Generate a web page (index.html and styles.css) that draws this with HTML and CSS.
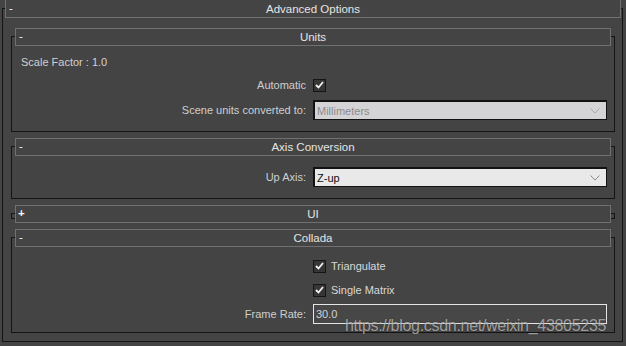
FILE: index.html
```html
<!DOCTYPE html>
<html>
<head>
    <meta name="viewport" content="width=device-width, initial-scale=1">
    <link rel="stylesheet" href="styles.css">
</head>
<body>
    <!-- Advanced Options rollout -->
    <div class="rollout">
        <div class="roll-head">
            <span class="sign">-</span>
            <span class="title">Advanced Options</span>
        </div>
        <div class="roll-body">

            <div class="group">
                <div class="roll-head sub">
                    <span class="sign">-</span>
                    <span class="title">Units</span>
                </div>
                <div class="group-body units">
                    <div class="full">Scale Factor : 1.0</div>
                    <div class="label">Automatic</div>
                    <div class="ctrl"><span class="check"><svg width="9" height="8" viewBox="0 0 9 8"><polyline points="1,4 3.5,6.5 8,1" fill="none" stroke="#f2f2f2" stroke-width="1.8"/></svg></span></div>
                    <div class="label">Scene units converted to:</div>
                    <div class="ctrl">
                        <div class="select disabled">
                            <span>Millimeters</span>
                            <svg width="10" height="6" viewBox="0 0 10 6"><polyline points="0.5,0.5 5,5 9.5,0.5" fill="none" stroke="#a9a9a9" stroke-width="1"/></svg>
                        </div>
                    </div>
                </div>
            </div>

            <div class="group">
                <div class="roll-head sub">
                    <span class="sign">-</span>
                    <span class="title">Axis Conversion</span>
                </div>
                <div class="group-body axis">
                    <div class="label">Up Axis:</div>
                    <div class="ctrl">
                        <div class="select">
                            <span>Z-up</span>
                            <svg width="10" height="6" viewBox="0 0 10 6"><polyline points="0.5,0.5 5,5 9.5,0.5" fill="none" stroke="#8a8a8a" stroke-width="1"/></svg>
                        </div>
                    </div>
                </div>
            </div>

            <div class="group collapsed">
                <div class="roll-head sub">
                    <span class="sign plus">+</span>
                    <span class="title">UI</span>
                </div>
            </div>

            <div class="group after-collapsed">
                <div class="roll-head sub">
                    <span class="sign">-</span>
                    <span class="title">Collada</span>
                </div>
                <div class="group-body collada">
                    <div class="label"></div>
                    <div class="ctrl"><span class="check"><svg width="9" height="8" viewBox="0 0 9 8"><polyline points="1,4 3.5,6.5 8,1" fill="none" stroke="#f2f2f2" stroke-width="1.8"/></svg></span><span class="check-text">Triangulate</span></div>
                    <div class="label"></div>
                    <div class="ctrl"><span class="check"><svg width="9" height="8" viewBox="0 0 9 8"><polyline points="1,4 3.5,6.5 8,1" fill="none" stroke="#f2f2f2" stroke-width="1.8"/></svg></span><span class="check-text">Single Matrix</span></div>
                    <div class="label">Frame Rate:</div>
                    <div class="ctrl"><div class="field">30.0</div></div>
                </div>
            </div>

        </div>
    </div>

    <div class="watermark">https://blog.csdn.net/weixin_43805235</div>
</body>
</html>
```

FILE: styles.css
```css
/* page */
body {
    margin: 0;
    width: 626px;
    height: 346px;
    overflow: hidden;
    background: #444444;
    font-family: "Liberation Sans", Arial, sans-serif;
    font-size: 11px;
    color: #d6d6d6;
    position: relative;
}

/* rollout bracket */
.rollout {
    border: 1px solid #141414;
    margin: 8px 3px 0 2px;
}

.roll-head {
    display: grid;
    grid-template-columns: 16px 1fr 16px;
    align-items: center;
    height: 19px;
    box-sizing: border-box;
    margin: -10px 1px 0 2px;
    border: 1px solid #707070;
    background: #444444;
    color: #e4e4e4;
    font-size: 11.5px;
}

.roll-head .sign {
    padding-left: 3px;
    line-height: 1;
    color: #f4f4f4;
}

.roll-head .plus {
    padding-left: 2px;
    font-weight: bold;
}

.roll-head .title {
    text-align: center;
}

.roll-body {
    padding-bottom: 8px;
}

/* nested groups */
.group {
    border: 1px solid #141414;
    margin: 18px 7px 0 8px;
}

.group + .group {
    margin-top: 14px;
}

.group.after-collapsed {
    margin-top: 18px;
}

.roll-head.sub {
    height: 18px;
    margin: -9px 3px 0 3px;
}

.collapsed .roll-head {
    margin-bottom: -5px;
}

.group-body {
    display: grid;
    grid-template-columns: 1fr 294px;
    column-gap: 7px;
    grid-auto-rows: 20px;
    align-items: center;
    padding: 0 7px 0 9px;
}

.units {
    grid-template-rows: 16px;
    row-gap: 5px;
    padding-top: 8px;
    padding-bottom: 11px;
}

.axis {
    padding-top: 11px;
    padding-bottom: 11px;
}

.collada {
    row-gap: 4px;
    padding-top: 9px;
    padding-bottom: 8px;
}

.full {
    grid-column: 1 / -1;
    color: #d0d0d0;
}

.label {
    text-align: right;
    color: #cfcfcf;
}

.ctrl {
    display: flex;
    align-items: center;
}

/* checkbox */
.check {
    width: 13px;
    height: 13px;
    box-sizing: border-box;
    border: 1px solid #151515;
    background: #363636;
    display: flex;
    align-items: center;
    justify-content: center;
}

.check-text {
    margin-left: 5px;
    color: #d8d8d8;
}

/* dropdown */
.select {
    width: 294px;
    height: 20px;
    box-sizing: border-box;
    border: 1px solid #121212;
    border-top-width: 2px;
    border-left-width: 2px;
    background: #e9e9e9;
    color: #111111;
    display: flex;
    align-items: center;
    justify-content: space-between;
    padding: 0 6px 0 2px;
}

.select.disabled {
    background: #d4d3d6;
    color: #8c8c8c;
}

/* text field */
.field {
    width: 294px;
    height: 20px;
    box-sizing: border-box;
    border: 1px solid #e4e4e4;
    background: #474747;
    color: #d2d2d2;
    padding: 3px 2px 0;
}

/* watermark sits over the page */
.watermark {
    position: absolute;
    left: 345px;
    top: 317px;
    font-size: 16px;
    letter-spacing: -0.3px;
    white-space: nowrap;
    color: rgba(235, 235, 235, 0.62);
    text-shadow: 0 0 1px rgba(0, 0, 0, 0.5);
}
```
